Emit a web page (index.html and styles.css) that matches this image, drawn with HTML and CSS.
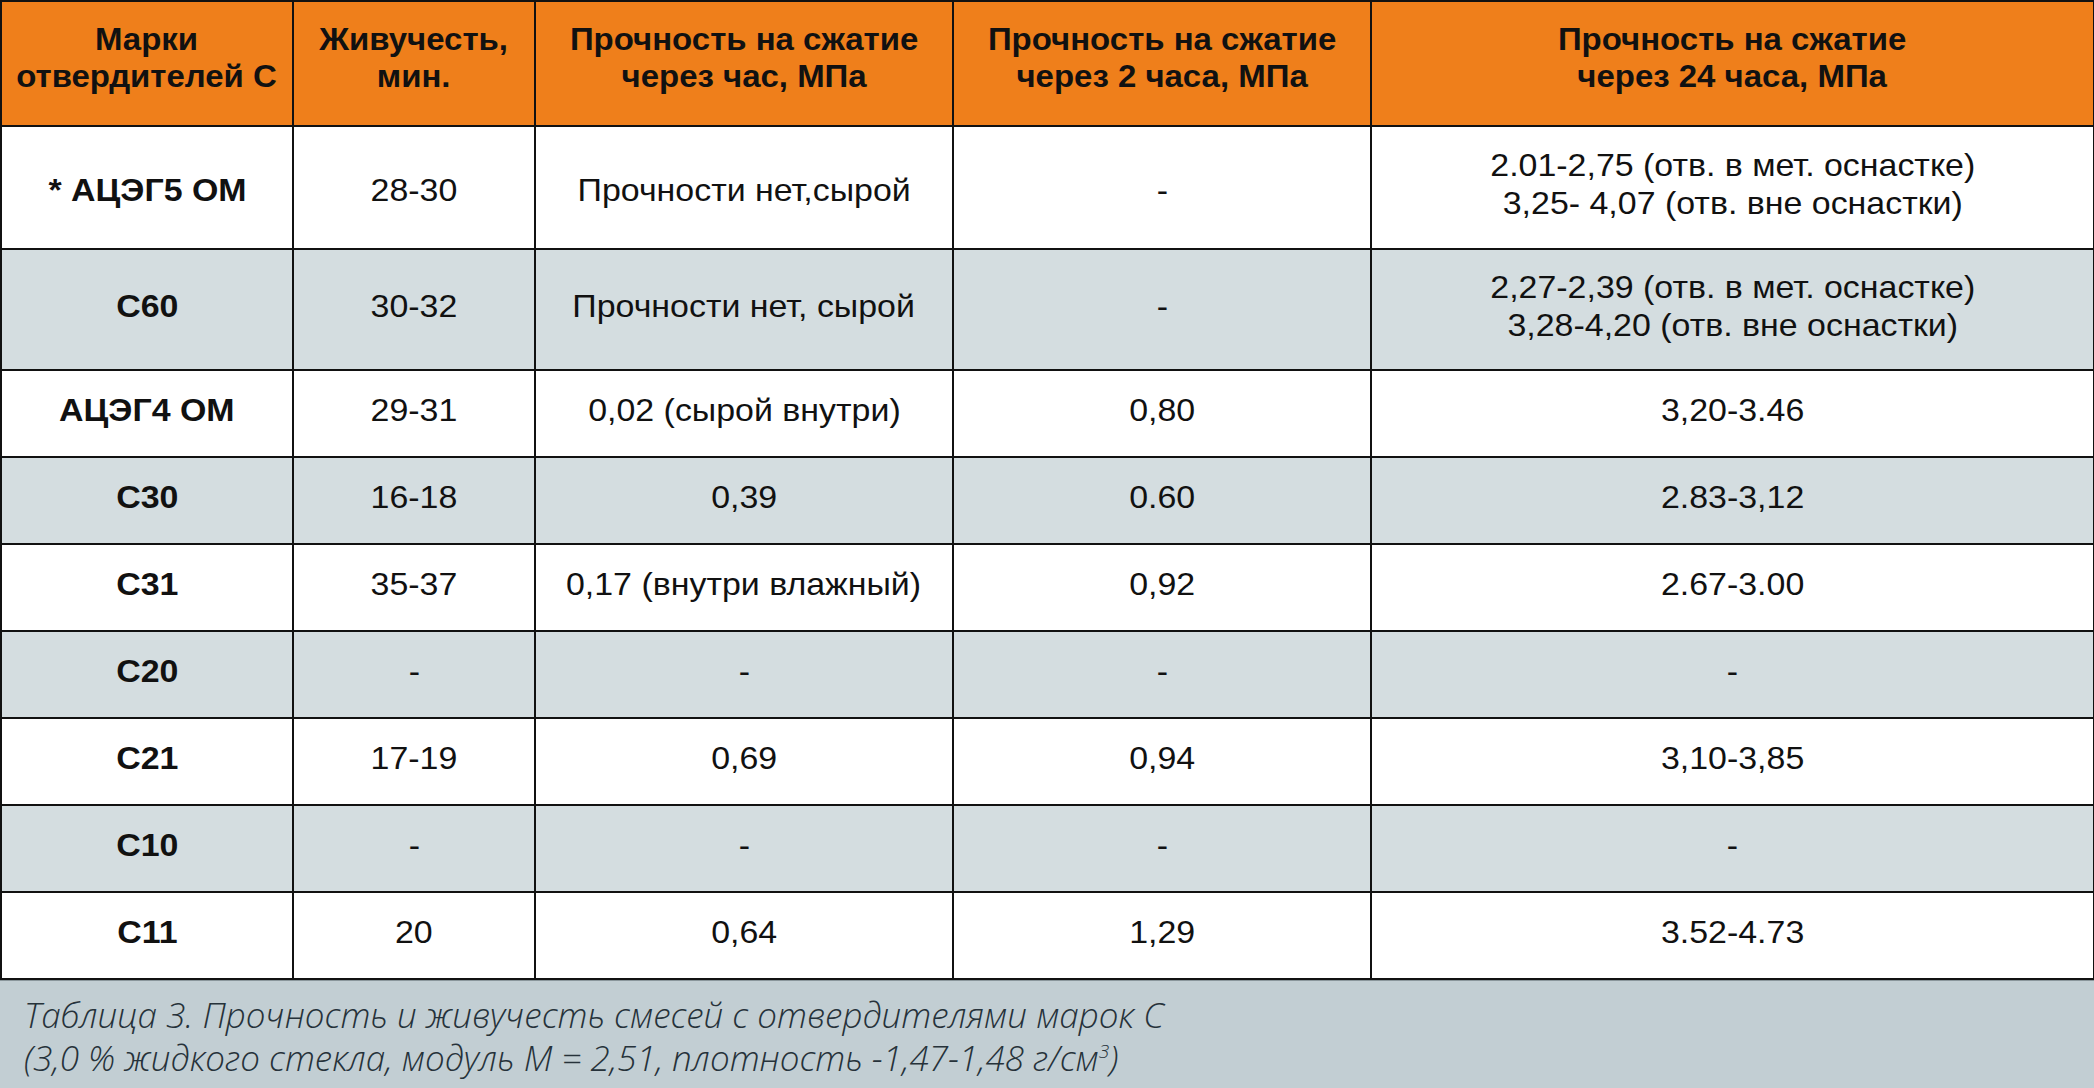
FILE: index.html
```html
<!DOCTYPE html>
<html lang="ru">
<head>
<meta charset="utf-8">
<title>Таблица 3</title>
<link rel="stylesheet" href="styles.css">
</head>
<body>
<div class="page">
  <table class="data">
    <colgroup>
      <col class="c1"><col class="c2"><col class="c3"><col class="c4"><col class="c5">
    </colgroup>
    <thead>
      <tr class="head">
        <th><span class="t">Марки<br>отвердителей С</span></th>
        <th><span class="t">Живучесть,<br>мин.</span></th>
        <th><span class="t">Прочность на сжатие<br>через час, МПа</span></th>
        <th><span class="t">Прочность на сжатие<br>через 2 часа, МПа</span></th>
        <th><span class="t">Прочность на сжатие<br>через 24 часа, МПа</span></th>
      </tr>
    </thead>
    <tbody>
      <tr class="r1 white">
        <td class="name"><span class="t low">* АЦЭГ5 ОМ</span></td>
        <td><span class="t low">28-30</span></td>
        <td><span class="t low">Прочности нет,сырой</span></td>
        <td><span class="t low">-</span></td>
        <td><span class="t">2.01-2,75 (отв. в мет. оснастке)<br>3,25- 4,07 (отв. вне оснастки)</span></td>
      </tr>
      <tr class="r2 gray">
        <td class="name"><span class="t">С60</span></td>
        <td><span class="t">30-32</span></td>
        <td><span class="t">Прочности нет, сырой</span></td>
        <td><span class="t">-</span></td>
        <td><span class="t">2,27-2,39 (отв. в мет. оснастке)<br>3,28-4,20 (отв. вне оснастки)</span></td>
      </tr>
      <tr class="rn white">
        <td class="name"><span class="t">АЦЭГ4 ОМ</span></td>
        <td><span class="t">29-31</span></td>
        <td><span class="t">0,02 (сырой внутри)</span></td>
        <td><span class="t">0,80</span></td>
        <td><span class="t">3,20-3.46</span></td>
      </tr>
      <tr class="rn gray">
        <td class="name"><span class="t">С30</span></td>
        <td><span class="t">16-18</span></td>
        <td><span class="t">0,39</span></td>
        <td><span class="t">0.60</span></td>
        <td><span class="t">2.83-3,12</span></td>
      </tr>
      <tr class="rn white">
        <td class="name"><span class="t">С31</span></td>
        <td><span class="t">35-37</span></td>
        <td><span class="t">0,17 (внутри влажный)</span></td>
        <td><span class="t">0,92</span></td>
        <td><span class="t">2.67-3.00</span></td>
      </tr>
      <tr class="rn gray">
        <td class="name"><span class="t">С20</span></td>
        <td><span class="t">-</span></td>
        <td><span class="t">-</span></td>
        <td><span class="t">-</span></td>
        <td><span class="t">-</span></td>
      </tr>
      <tr class="rn white">
        <td class="name"><span class="t">С21</span></td>
        <td><span class="t">17-19</span></td>
        <td><span class="t">0,69</span></td>
        <td><span class="t">0,94</span></td>
        <td><span class="t">3,10-3,85</span></td>
      </tr>
      <tr class="rn gray">
        <td class="name"><span class="t">С10</span></td>
        <td><span class="t">-</span></td>
        <td><span class="t">-</span></td>
        <td><span class="t">-</span></td>
        <td><span class="t">-</span></td>
      </tr>
      <tr class="rn white">
        <td class="name"><span class="t">С11</span></td>
        <td><span class="t">20</span></td>
        <td><span class="t">0,64</span></td>
        <td><span class="t">1,29</span></td>
        <td><span class="t">3.52-4.73</span></td>
      </tr>
    </tbody>
  </table>
  <div class="caption">
    <p>Таблица 3. Прочность и живучесть смесей с отвердителями марок С</p>
    <p>(3,0 % жидкого стекла, модуль М = 2,51, плотность -1,47-1,48 г/см<sup>3</sup>)</p>
  </div>
</div>
</body>
</html>
```

FILE: styles.css
```css
html, body {
  margin: 0;
  padding: 0;
  background: #c2ced3;
}

.page {
  width: 2094px;
  height: 1088px;
  display: flex;
  flex-direction: column;
  overflow: hidden;
}

.data {
  border-collapse: collapse;
  table-layout: fixed;
  width: 2093px;
  font-family: "Liberation Sans", Arial, sans-serif;
  color: #111;
  flex: none;
}

.c1 { width: 292px; }
.c2 { width: 242px; }
.c3 { width: 418px; }
.c4 { width: 418px; }
.c5 { width: 723px; }

.data th,
.data td {
  border: 2px solid #111;
  padding: 0 0 8px 0;
  text-align: center;
  vertical-align: middle;
}

.t {
  display: inline-block;
  transform: scaleX(1.06);
  transform-origin: center;
  white-space: nowrap;
}

.head th {
  background: #ef7f1b;
  font-size: 32px;
  font-weight: bold;
  line-height: 37px;
  height: 111px;
  padding-bottom: 12px;
}

.head .t {
  transform: scaleX(1.03);
}

.data td {
  font-size: 32px;
  line-height: 38px;
}

.data td.name {
  font-weight: bold;
}

.white td { background: #ffffff; }
.gray td { background: #d4dde0; }

.r1 td { height: 113px; }
.r2 td { height: 111px; }
.rn td { height: 77px; }

.t.low {
  position: relative;
  top: 6px;
}

.caption {
  flex: 1;
  background: #c2ced3;
  padding: 12px 0 0 24px;
  font-family: "Open Sans", "Lato", sans-serif;
  font-style: italic;
  font-weight: 300;
  font-size: 35px;
  line-height: 43px;
  color: #26323a;
  border-top: 1px solid #8a969b;
}

.caption p {
  margin: 0;
}

.caption sup {
  font-size: 19px;
  line-height: 0;
}
```
